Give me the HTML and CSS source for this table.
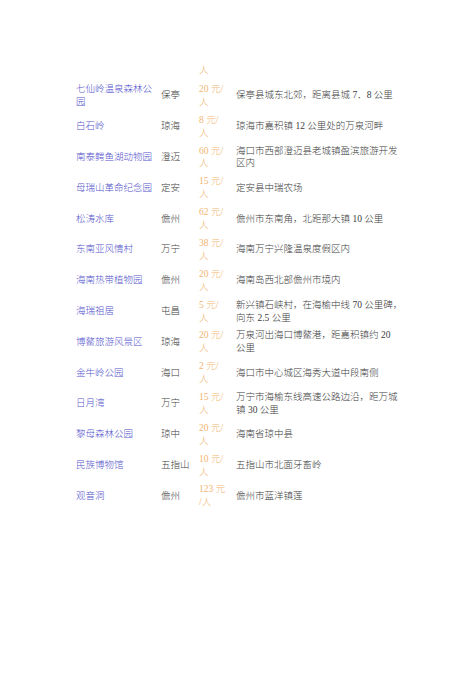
FILE: index.html
```html
<!DOCTYPE html>
<html lang="zh-CN">
<head>
<meta charset="utf-8">
<title>海南景点</title>
<link rel="stylesheet" href="styles.css">
</head>
<body>
<div class="page">
<table class="spots">
<colgroup><col class="c-name"><col class="c-city"><col class="c-price"><col class="c-desc"></colgroup>
<tbody>
<tr class="cont"><td class="name"></td><td class="city"></td><td class="price">人</td><td class="desc"></td></tr>
<tr><td class="name">七仙岭温泉森林公园</td><td class="city">保亭</td><td class="price">20 元/人</td><td class="desc">保亭县城东北郊，距离县城 7．8 公里</td></tr>
<tr><td class="name">白石岭</td><td class="city">琼海</td><td class="price">8 元/人</td><td class="desc">琼海市嘉积镇 12 公里处的万泉河畔</td></tr>
<tr><td class="name">南泰鳄鱼湖动物园</td><td class="city">澄迈</td><td class="price">60 元/人</td><td class="desc">海口市西部澄迈县老城镇盈滨旅游开发区内</td></tr>
<tr><td class="name">母瑞山革命纪念园</td><td class="city">定安</td><td class="price">15 元/人</td><td class="desc">定安县中瑞农场</td></tr>
<tr><td class="name">松涛水库</td><td class="city">儋州</td><td class="price">62 元/人</td><td class="desc">儋州市东南角，北距那大镇 10 公里</td></tr>
<tr><td class="name">东南亚风情村</td><td class="city">万宁</td><td class="price">38 元/人</td><td class="desc">海南万宁兴隆温泉度假区内</td></tr>
<tr><td class="name">海南热带植物园</td><td class="city">儋州</td><td class="price">20 元/人</td><td class="desc">海南岛西北部儋州市境内</td></tr>
<tr><td class="name">海瑞祖居</td><td class="city">屯昌</td><td class="price">5 元/人</td><td class="desc">新兴镇石峡村，在海榆中线 70 公里碑，向东 2.5 公里</td></tr>
<tr><td class="name">博鳌旅游风景区</td><td class="city">琼海</td><td class="price">20 元/人</td><td class="desc">万泉河出海口博鳌港，距嘉积镇约 20 <span class="keep">公里</span></td></tr>
<tr><td class="name">金牛岭公园</td><td class="city">海口</td><td class="price">2 元/人</td><td class="desc">海口市中心城区海秀大道中段南侧</td></tr>
<tr><td class="name">日月湾</td><td class="city">万宁</td><td class="price">15 元/人</td><td class="desc">万宁市海榆东线高速公路边沿，距万城镇 30 公里</td></tr>
<tr><td class="name">黎母森林公园</td><td class="city">琼中</td><td class="price">20 元/人</td><td class="desc">海南省琼中县</td></tr>
<tr><td class="name">民族博物馆</td><td class="city">五指山</td><td class="price">10 元/人</td><td class="desc">五指山市北面牙畜岭</td></tr>
<tr><td class="name">观音洞</td><td class="city">儋州</td><td class="price">123 元/人</td><td class="desc">儋州市蓝洋镇莲</td></tr>
</tbody>
</table>
</div>
</body>
</html>
```
FILE: styles.css
```css
html, body {
  margin: 0;
  padding: 0;
  background: #ffffff;
}

.page {
  padding: 61px 0 0 76px;
  font-family: "Liberation Serif", "Noto Sans CJK SC", serif;
  font-size: 9.5px;
  font-weight: 300;
  line-height: 12.9px;
  color: #3c3c3c;
}

.spots {
  width: 328px;
  border-collapse: collapse;
  border-spacing: 0;
  table-layout: fixed;
}

.c-name { width: 85px; }
.c-city { width: 38px; }
.c-price { width: 37px; }
.c-desc { width: 168px; }

.spots td {
  padding: 2.5px 0;
  vertical-align: middle;
  word-break: break-all;
}

.name {
  padding-right: 5px !important;
  color: #5656cc;
}

.city {
  padding-right: 4px !important;
}

.price {
  padding-right: 10px !important;
  color: #f2b570;
  line-break: anywhere;
}

.keep {
  white-space: nowrap;
}

.cont td {
  padding-bottom: 4px;
}
```
